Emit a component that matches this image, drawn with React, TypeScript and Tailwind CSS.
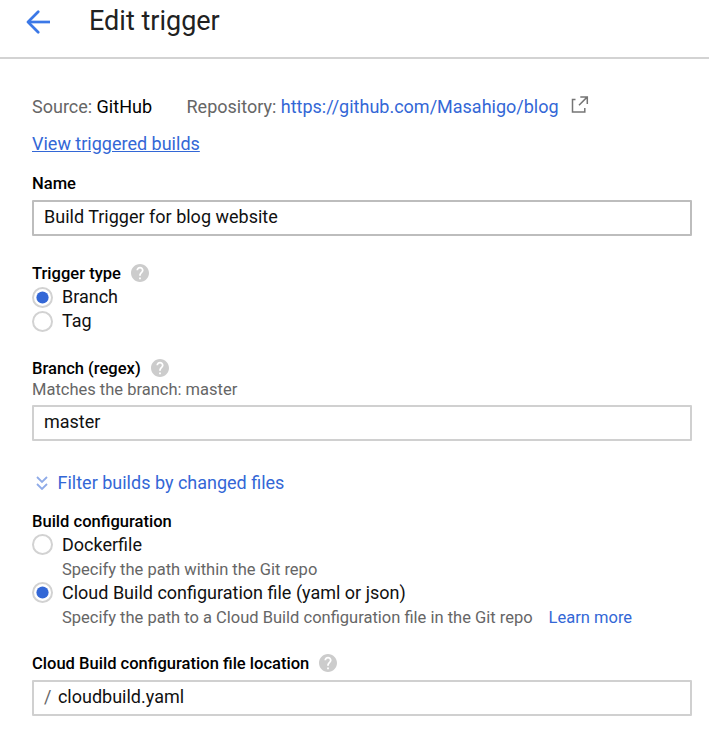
import type { ReactNode } from 'react';

function Label({ children, help }: { children: ReactNode; help?: boolean }) {
  return (
    <div className="flex h-6 items-center gap-[10px] text-[16.56px] font-medium text-black">
      <span className="pt-[2px]">{children}</span>
      {help && (
        <svg width="18" height="18" viewBox="2 2 20 20" fill="#cccccc" aria-label="Help">
          <path d="M12 2C6.48 2 2 6.48 2 12s4.48 10 10 10 10-4.48 10-10S17.52 2 12 2zm1 17h-2v-2h2v2zm2.07-7.75l-.9.92C13.45 12.9 13 13.5 13 15h-2v-.5c0-1.1.45-2.1 1.17-2.83l1.24-1.26c.37-.36.59-.86.59-1.41 0-1.1-.9-2-2-2s-2 .9-2 2H8c0-2.21 1.79-4 4-4s4 1.79 4 4c0 .88-.36 1.68-.93 2.25z" />
        </svg>
      )}
    </div>
  );
}

function Radio({ checked, raised, children }: { checked?: boolean; raised?: boolean; children: ReactNode }) {
  return (
    <div className="flex h-6 items-start gap-[9px] text-[18px] leading-6 text-[#111]">
      <svg className={raised ? 'mt-px' : 'mt-[2px]'} width="21" height="21" viewBox="0 0 21 21">
        <circle cx="10.5" cy="10.5" r="9.5" fill="none" stroke="#d2d2d2" strokeWidth="2" />
        {checked && <circle cx="10.5" cy="10.5" r="6.1" fill="#3367d6" />}
      </svg>
      <span>{children}</span>
    </div>
  );
}

function Field({ children, dark }: { children: ReactNode; dark?: boolean }) {
  return (
    <div
      className={`mt-[5px] flex h-9 items-center rounded-[1px] border-2 px-[10px] pb-[3px] text-[18px] text-[#111] ${
        dark ? 'border-[#bdbdbd]' : 'border-[#d0d0d0]'
      }`}
    >
      {children}
    </div>
  );
}

export default function App() {
  return (
    <div className="h-[730px] w-[709px] overflow-hidden bg-white font-['Roboto',sans-serif] whitespace-nowrap">
      <header className="flex h-[59px] items-start border-b-2 border-[#d3d3d3] pl-[26px]">
        <svg className="mt-[10px]" width="24" height="24" viewBox="0 0 24 24" fill="none" stroke="#3b78e7" strokeWidth="2.7" aria-label="Back">
          <path d="M12.2 1.7L2 12l10.2 10.3" strokeLinecap="round" strokeLinejoin="round" />
          <path d="M2 12h22" />
        </svg>
        <h1 className="ml-[39px] mt-[3px] text-[27px] leading-[36px] text-[#212121]">Edit trigger</h1>
      </header>
      <main className="pl-8 pr-[17px] pt-9">
        <div className="flex h-6 items-start text-[18px] leading-6 text-[#666]">
          <span>Source: <span className="text-black">GitHub</span></span>
          <span className="ml-[34.5px]">Repository: <a className="text-[#3367d6]">https://github.com/Masahigo/blog</a></span>
          <svg className="ml-3 mt-px" width="18" height="18" viewBox="0 0 18 18" fill="none" stroke="#757575" strokeWidth="1.5" aria-label="Open in new tab">
            <path d="M4.5 3.6H1.5v12.5h12.3v-4M9.3 .9h7v7M16.3 .9L8 9.2" />
          </svg>
        </div>
        <div className="mt-[13px] flex h-6 items-start text-[18px] leading-6 text-[#3367d6]">
          <a className="underline">View triggered builds</a>
        </div>

        <div className="mt-[15px]"><Label>Name</Label></div>
        <Field dark>Build Trigger for blog website</Field>

        <div className="mt-[25px]"><Label help>Trigger type</Label></div>
        <Radio checked>Branch</Radio>
        <Radio>Tag</Radio>

        <div className="mt-[23px]"><Label help>Branch (regex)</Label></div>
        <p className="h-5 text-[16.5px] leading-5 text-[#666]">Matches the branch: master</p>
        <Field>master</Field>

        <div className="mt-[30px] flex h-6 items-start text-[18px] leading-6 text-[#3367d6]">
          <svg className="ml-1 mt-[5px]" width="12" height="14" viewBox="0 0 12 14" fill="none" stroke="#8fabe8" strokeWidth="1.8">
            <path d="M1 1l5 5 5-5M1 8l5 5 5-5" />
          </svg>
          <a className="ml-[9.5px]">Filter builds by changed files</a>
        </div>

        <div className="mt-[14px]"><Label>Build configuration</Label></div>
        <Radio raised>Dockerfile</Radio>
        <p className="h-6 pl-[30px] pt-px text-[16.5px] leading-6 text-[#666]">Specify the path within the Git repo</p>
        <Radio raised checked>Cloud Build configuration file (yaml or json)</Radio>
        <p className="h-6 pl-[30px] pt-px text-[16.5px] leading-6 text-[#666]">
          Specify the path to a Cloud Build configuration file in the Git repo
          <a className="ml-4 text-[#3367d6]">Learn more</a>
        </p>

        <div className="mt-[22px]"><Label help>Cloud Build configuration file location</Label></div>
        <Field><span className="mr-[6.5px] text-[#666]">/</span>cloudbuild.yaml</Field>
      </main>
    </div>
  );
}
